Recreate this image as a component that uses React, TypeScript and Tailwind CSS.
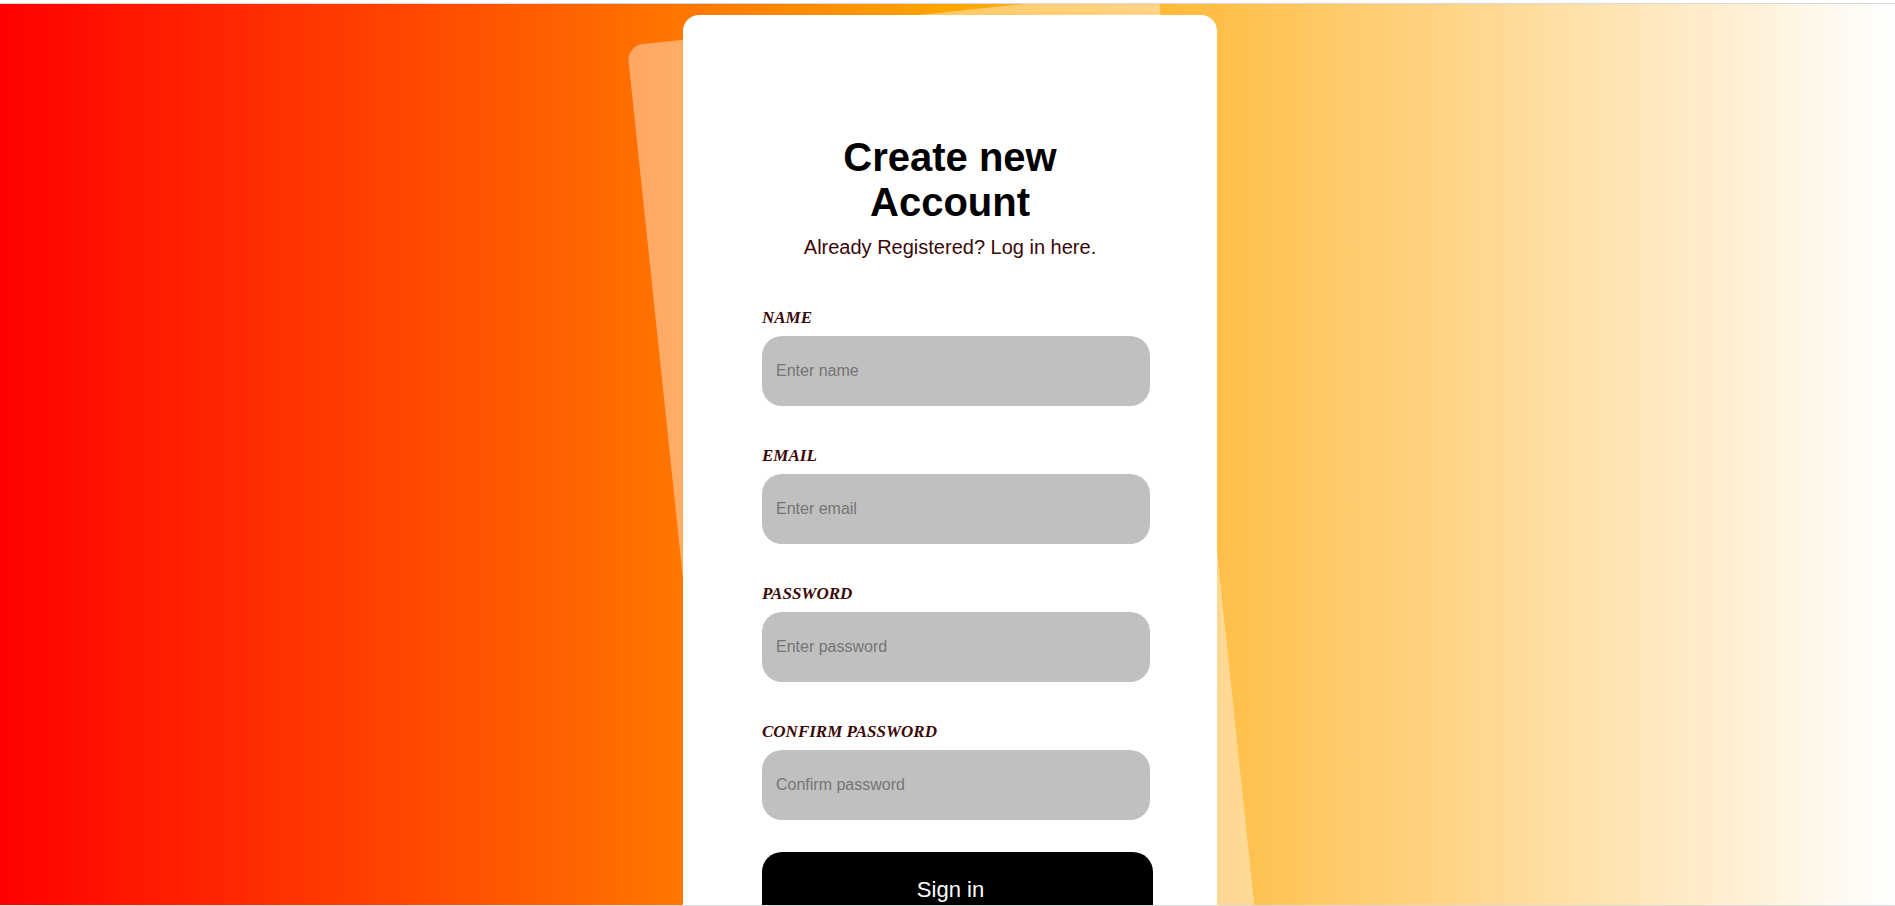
const fields = [
  { id: 1, label: "NAME", type: "text", placeholder: "Enter name" },
  { id: 2, label: "EMAIL", type: "email", placeholder: "Enter email" },
  { id: 3, label: "PASSWORD", type: "password", placeholder: "Enter password" },
  { id: 4, label: "CONFIRM PASSWORD", type: "password", placeholder: "Confirm password" },
]

const App = () => {
  return (
    <div className="h-screen overflow-hidden bg-white pt-[3px] font-['Liberation_Sans',Arial,sans-serif]">
      <div className="h-full overflow-hidden border-y border-[#d9d9d9] bg-[linear-gradient(to_right,#ff0000,#ffa500,#ffffff)] pt-[11px]">
        <div className="relative ml-[683px] h-[1024px] w-[534px]">
          {/* tilted card behind */}
          <div className="absolute inset-0 -translate-x-[4px] -rotate-6 rounded-2xl bg-white/40" />

          <div className="relative h-full rounded-2xl bg-white pt-[120px]">
            <h1 className="mx-auto max-w-[300px] text-center text-[40px] leading-[45px] font-bold text-black">
              Create new Account
            </h1>
            <p className="mt-[11px] text-center text-[20px] leading-[23px] text-[#3a0808]">
              Already Registered? Log in here.
            </p>

            <form className="mt-[49px] ml-[79px] flex w-[391px] flex-col gap-[40px]">
              {fields.map(({ id, label, type, placeholder }) => (
                <div key={id} className="flex flex-col">
                  <label className="mb-[8px] font-['Liberation_Serif',serif] text-[17px] leading-[20px] font-bold italic text-[#3a0808]">
                    {label}
                  </label>
                  <input
                    type={type}
                    placeholder={placeholder}
                    autoFocus={id === 1}
                    className="h-[70px] w-[388px] rounded-[20px] bg-[#c0c0c0] pl-[14px] text-[16px] text-black outline-none placeholder:text-[#757575]"
                  />
                </div>
              ))}
              <button
                type="button"
                className="-mt-[8px] h-[75px] w-[391px] rounded-[20px] bg-black pr-[14px] text-[22px] text-white"
              >
                Sign in
              </button>
            </form>
          </div>
        </div>
      </div>
    </div>
  )
}

export default App
